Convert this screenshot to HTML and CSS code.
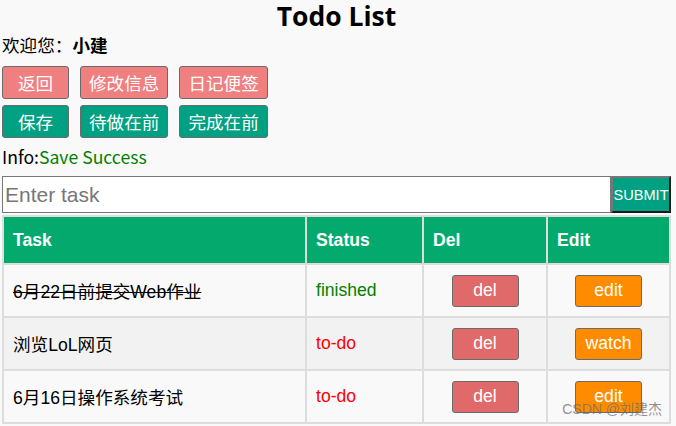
FILE: index.html
```html
<!DOCTYPE html>
<html lang="zh">
<head>
<meta charset="utf-8">
<title>Todo List</title>
<meta name="viewport" content="width=device-width,initial-scale=1">
<link rel="stylesheet" href="styles.css">
</head>
<body>

<h1>Todo List</h1>
<div class="welcome">欢迎您：<strong>小建</strong></div>

<div class="btn-row">
  <button class="btn btn-red">返回</button>
  <button class="btn btn-red">修改信息</button>
  <button class="btn btn-red">日记便签</button>
</div>
<div class="btn-row">
  <button class="btn btn-teal">保存</button>
  <button class="btn btn-teal">待做在前</button>
  <button class="btn btn-teal">完成在前</button>
</div>

<div class="info">Info:<span class="ok">Save Success</span></div>

<form class="add" onsubmit="return false">
  <input type="text" placeholder="Enter task">
  <button class="submit">SUBMIT</button>
</form>

<table class="todo">
  <thead>
    <tr><th class="c-task">Task</th><th class="c-status">Status</th><th class="c-del">Del</th><th>Edit</th></tr>
  </thead>
  <tbody>
    <tr>
      <td class="done">6月22日前提交Web作业</td>
      <td class="finished">finished</td>
      <td class="mid"><button class="act act-del">del</button></td>
      <td class="mid"><button class="act act-edit">edit</button></td>
    </tr>
    <tr>
      <td>浏览LoL网页</td>
      <td class="todo-st">to-do</td>
      <td class="mid"><button class="act act-del">del</button></td>
      <td class="mid"><button class="act act-edit">watch</button></td>
    </tr>
    <tr>
      <td>6月16日操作系统考试</td>
      <td class="todo-st">to-do</td>
      <td class="mid"><button class="act act-del">del</button></td>
      <td class="mid"><button class="act act-edit">edit</button></td>
    </tr>
  </tbody>
</table>

<div class="mark">CSDN @刘建杰</div>

</body>
</html>
```

FILE: styles.css
```css
*{box-sizing:border-box}
body{margin:0 5px 0 2px;background:#f8f9f8;color:#000;
     font-family:"Noto Sans CJK SC","Noto Sans",sans-serif;font-size:17.6px}
h1{margin:0;height:32px;line-height:32px;text-align:center;font-size:26.5px;
   font-family:"Open Sans","Noto Sans CJK SC",sans-serif;font-weight:700}
.welcome{height:25px;line-height:25px;margin-top:0}
.welcome strong{font-weight:700}

.btn-row{display:flex;gap:11px;margin-top:9px}
.btn-row + .btn-row{margin-top:6px}
.btn{height:33px;min-width:67px;padding:0 8px;border:1px solid #6b6b6b;border-radius:3px;
     color:#fff;font-family:"Noto Sans CJK SC",sans-serif;font-size:17.6px;line-height:1}
.btn-red{background:#f08080}
.btn-teal{background:#00a182}

.info{height:26px;line-height:26px;margin-top:6px}
.ok{color:#008000}

.add{display:flex;margin:6px 0 2px}
.add input{flex:1;height:37px;border:1px solid #777;background:#fff;padding:0 2px;
           font-family:"Liberation Sans",Arial,sans-serif;font-size:21px;outline:none}
.add input::placeholder{color:#767676}
.submit{width:60px;height:37px;padding:0;background:#00a182;color:#fff;
        border:2px solid;border-color:#767676 #1a1a1a #1a1a1a #767676;
        font-family:"Liberation Sans",Arial,sans-serif;font-size:14.6px}

.todo{width:100%;border-collapse:collapse;
      font-family:"Liberation Sans",Arial,"Noto Sans CJK SC",sans-serif;font-size:17.6px}
.todo th,.todo td{border:2px solid #dddddd;text-align:left;padding:0 9px}
.todo th{background:#04aa6d;color:#fff;height:48px;font-weight:700}
.todo td{height:53px}
.todo tbody tr:nth-child(even){background:#f2f2f2}
.c-task{width:303px}
.c-status{width:117px}
.c-del{width:124px}
.done{text-decoration:line-through}
.finished{color:#008000}
.todo-st{color:#ff0000}
.todo td.mid{text-align:center}
.act{width:67px;height:32px;border:1px solid #6b6b6b;border-radius:3px;color:#fff;
     font-family:"Liberation Sans",Arial,sans-serif;font-size:17.6px}
.act-del{background:#e06a6a}
.act-edit{background:#ff8c00}

.mark{position:absolute;right:14px;top:398px;color:rgba(110,110,110,.75);
      font-family:"Liberation Sans","Noto Sans CJK SC",sans-serif;font-size:14px}
```
